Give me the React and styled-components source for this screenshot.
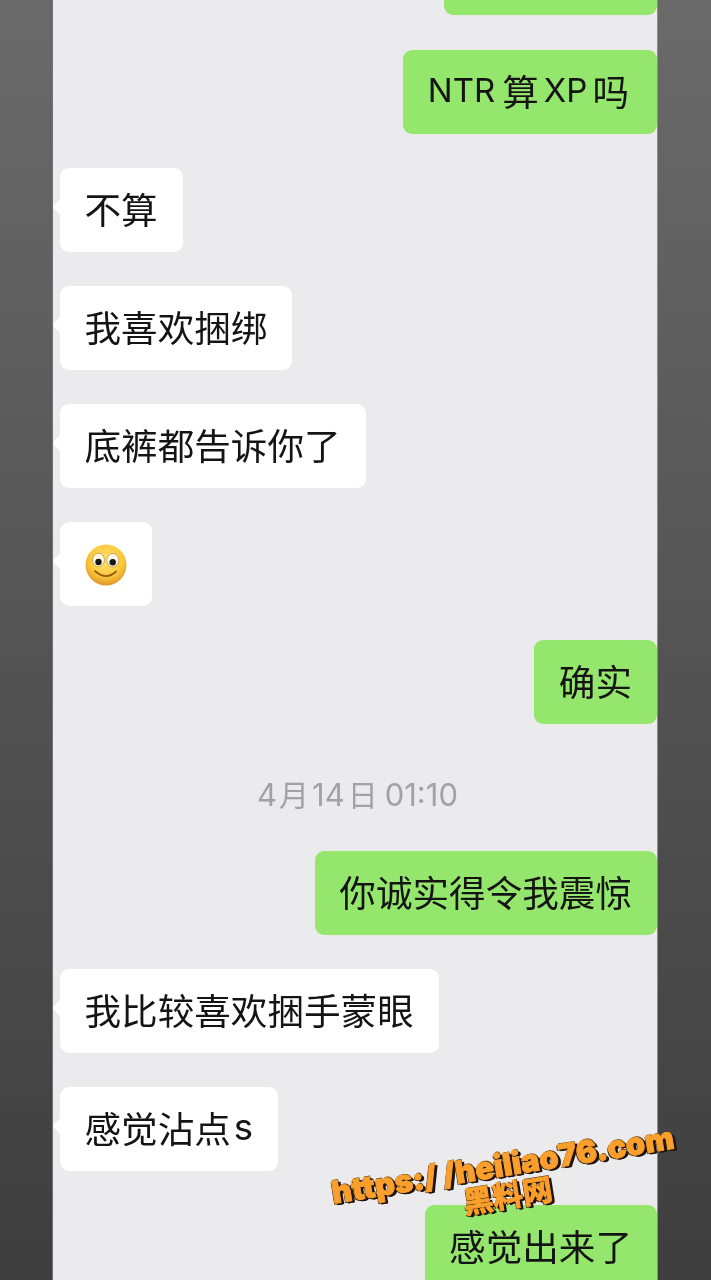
import styled, { createGlobalStyle } from "styled-components";

const GlobalStyle = createGlobalStyle`
  html, body {
    margin: 0;
    padding: 0;
    background: #4f4f4f;
  }
`;

const Screen = styled.div`
  position: relative;
  display: flex;
  width: 711px;
  height: 1280px;
  overflow: hidden;
  font-family: Inter, "Noto Sans CJK SC", sans-serif;
  background: linear-gradient(180deg, #6a6a6a 0%, #565656 45%, #3e3e3e 100%);
  filter: blur(0.35px);
`;

const Chat = styled.main`
  display: flex;
  flex-direction: column;
  align-items: flex-start;
  gap: 34px;
  width: 604px;
  height: 1280px;
  margin-left: 53px;
  background: #ebebed;
  border-right: 1.5px solid #8d8d8f;
  box-shadow: -1px 0 0 #707072;
  flex-shrink: 0;
`;

const Row = styled.div`
  display: flex;
  width: 100%;
  justify-content: ${(p) => (p.$mine ? "flex-end" : "flex-start")};
  padding-left: ${(p) => (p.$mine ? "0" : "7px")};
  box-sizing: border-box;
  margin-top: ${(p) => p.$top || 0}px;
`;

const Bubble = styled.div`
  position: relative;
  display: flex;
  align-items: center;
  flex-shrink: 0;
  box-sizing: border-box;
  height: 84px;
  padding: 0 ${(p) => p.$right || 25}px 4px 24.5px;
  border-radius: 9px;
  font-size: 36.6px;
  color: #141414;
  white-space: nowrap;
  background: ${(p) => (p.$mine ? "#95e66c" : "#ffffff")};

  &::before {
    content: "";
    display: ${(p) => (p.$mine ? "none" : "block")};
    position: absolute;
    left: -5px;
    top: 32px;
    width: 14px;
    height: 14px;
    border-radius: 3px;
    background: #ffffff;
    transform: rotate(45deg);
  }
`;

const CutOff = styled.span`
  display: block;
  width: 164px;
`;

const Latin = styled.span`
  font-size: ${(p) => p.$size || 33}px;
  margin-left: ${(p) => p.$before || 0}px;
  margin-right: ${(p) => p.$after || 0}px;
`;

const Stamp = styled.div`
  display: flex;
  justify-content: center;
  align-items: baseline;
  width: 100%;
  margin-top: 15px;
  padding-left: 10px;
  box-sizing: border-box;
  font-size: 30px;
  line-height: 44px;
  color: #a2a2a3;
`;

const StampPart = styled.span`
  font-size: 31px;
  margin: 0 ${(p) => p.$side || 3}px;
`;

const Watermark = styled.div`
  position: absolute;
  left: 325px;
  top: 1148px;
  width: 360px;
  text-align: center;
  color: #fa9f2b;
  font-weight: 900;
  transform: rotate(-9.2deg);
  -webkit-text-stroke: 1px #fa9f2b;
  text-shadow: 1px 1px 0 #20140a, 2px 2px 0 #20140a, 3px 2px 0 #20140a, -1px 1px 0 #20140a, 1px -1px 0 #6b4415;
`;

const WatermarkUrl = styled.div`
  font-size: 31px;
  line-height: 34px;
  white-space: nowrap;
`;

const WatermarkName = styled.div`
  font-size: 30px;
  line-height: 30px;
  margin-top: -1px;
  font-weight: 700;
`;

const Face = styled.svg`
  display: block;
  margin-top: 6px;
`;

function Smiley() {
  return (
    <Face width="42" height="42" viewBox="0 0 42 42" aria-hidden="true">
      <defs>
        <radialGradient id="face" cx="50%" cy="38%" r="62%">
          <stop offset="0%" stopColor="#ffe66d" />
          <stop offset="65%" stopColor="#fbc93c" />
          <stop offset="100%" stopColor="#e0952a" />
        </radialGradient>
      </defs>
      <circle cx="21" cy="21" r="20.5" fill="url(#face)" />
      <ellipse cx="13.5" cy="16" rx="6" ry="6.8" fill="#fff8e6" stroke="#b98a35" strokeWidth="0.7" />
      <ellipse cx="27.7" cy="16.2" rx="6" ry="6.8" fill="#fff8e6" stroke="#b98a35" strokeWidth="0.7" />
      <circle cx="13.5" cy="18" r="3.2" fill="#161616" />
      <circle cx="27.7" cy="18.2" r="3.2" fill="#161616" />
      <path d="M10 27 Q21 37 31 27.5" fill="none" stroke="#9a5a12" strokeWidth="1.8" strokeLinecap="round" />
    </Face>
  );
}

export default function App() {
  return (
    <Screen>
      <GlobalStyle />
      <Chat>
        <Row $mine $top={-69}>
          <Bubble $mine>
            <CutOff />
          </Bubble>
        </Row>
        <Row $mine $top={1}>
          <Bubble $mine $right={28}>
            <Latin $after={7}>NTR</Latin>算<Latin $before={5} $after={5}>XP</Latin>吗
          </Bubble>
        </Row>
        <Row>
          <Bubble>不算</Bubble>
        </Row>
        <Row>
          <Bubble>我喜欢捆绑</Bubble>
        </Row>
        <Row>
          <Bubble>底裤都告诉你了</Bubble>
        </Row>
        <Row>
          <Bubble>
            <Smiley />
          </Bubble>
        </Row>
        <Row $mine>
          <Bubble $mine>确实</Bubble>
        </Row>
        <Stamp>
          <StampPart $side={2}>4</StampPart>月<StampPart>14</StampPart>日<StampPart $side={7}>01:10</StampPart>
        </Stamp>
        <Row $mine>
          <Bubble $mine>你诚实得令我震惊</Bubble>
        </Row>
        <Row>
          <Bubble>我比较喜欢捆手蒙眼</Bubble>
        </Row>
        <Row>
          <Bubble>
            感觉沾点<Latin $size={36.6} $before={3}>s</Latin>
          </Bubble>
        </Row>
        <Row $mine>
          <Bubble $mine>感觉出来了</Bubble>
        </Row>
      </Chat>
      <Watermark>
        <WatermarkUrl>https:/ /heiliao76.com</WatermarkUrl>
        <WatermarkName>黑料网</WatermarkName>
      </Watermark>
    </Screen>
  );
}
